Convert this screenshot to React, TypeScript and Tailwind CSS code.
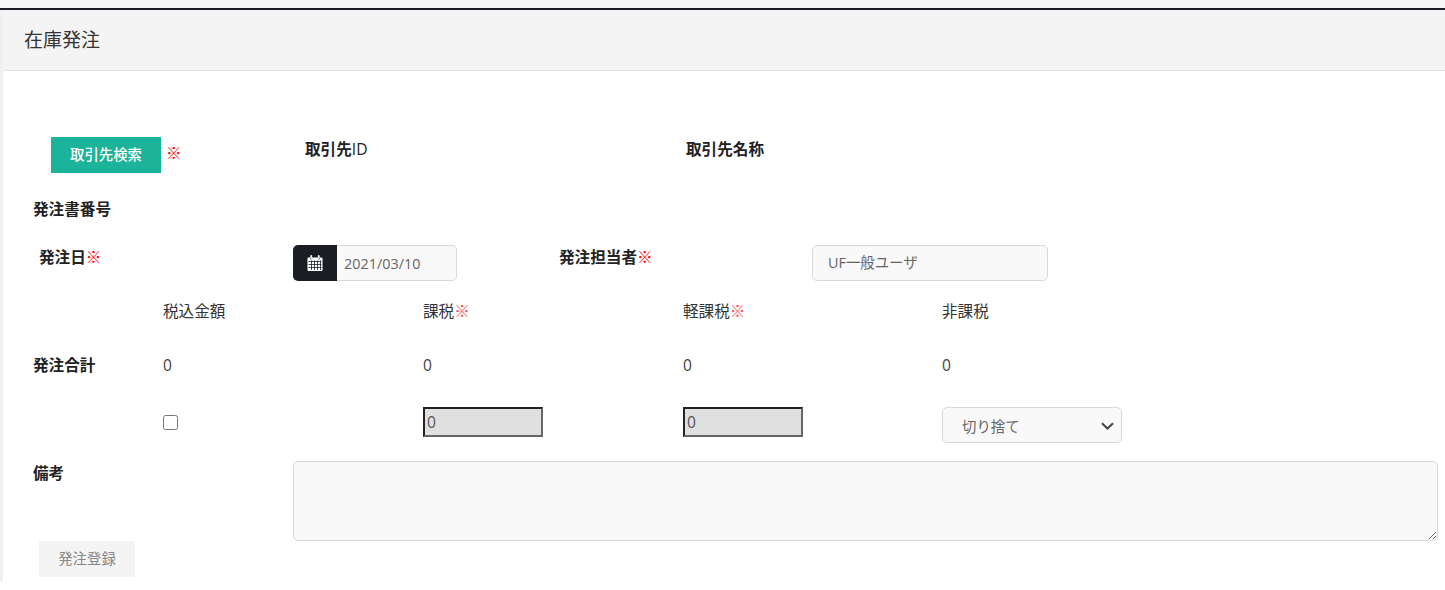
import React from "react";

function Req() {
  return <span className="text-[#ff0000]">※</span>;
}

function CalendarIcon() {
  return (
    <svg width="16" height="16" viewBox="0 0 16 16" fill="none">
      <path d="M0.5 3.500a1 1 0 0 1 1-1H3v1.800h2V2.500h6v1.800h2V2.500h1.500a1 1 0 0 1 1 1V15a1 1 0 0 1-1 1h-13a1 1 0 0 1-1-1z" fill="#fff" />
      <path d="M3.800 0.500h0.800v3h-0.800zM11.400 0.500h0.800v3h-0.800z" stroke="#fff" strokeWidth="1" />
      <path d="M1.500 6.500h13M1.500 9.500h13M1.500 12.500h13M4.500 5.500v9.500M7.500 5.500v9.500M10.500 5.500v9.500M13.500 5.500v9.500" stroke="#1a1d24" strokeWidth="0.8" />
    </svg>
  );
}

export default function App() {
  const font = "font-['Open_Sans','Noto_Sans_CJK_JP',sans-serif]";
  const inputBox =
    "rounded-[5px] border border-[#d9d9d9] bg-[#f9f9f9] text-[14.4px] text-[#666]";
  const inset =
    "h-[30px] w-[120px] border-2 border-t-[#222] border-l-[#222] border-r-[#666] border-b-[#666] bg-[#e0e0e0] px-[2px] text-[15.6px] text-[#555]";
  const bold = "font-bold leading-[22px] text-[#222]";
  return (
    <div className={`${font} min-h-[590px] bg-white text-[15.6px] text-[#333]`}>
      <div className="h-[8px] bg-[#f7f7f7]" />
      <div className="h-[574px] border-l-[3px] border-[#f0f0f0]">
        <div className="h-[2px] -ml-[3px] bg-[#1a1d24]" />
        <div className="flex h-[61px] items-center border-b border-[#e3e3e3] bg-[#f4f4f4] pl-[21px] text-[19px] text-[#333]">
          在庫発注
        </div>

        <div className="flex h-[36px] mt-[66px]">
          <div className="ml-[48px] flex w-[241px] items-center">
            <button className="h-[36px] w-[110px] bg-[#1cb39b] text-[14.4px] font-medium text-white">取引先検索</button>
            <span className="ml-[5px] -mt-[3px]"><Req /></span>
          </div>
          <div className={`ml-[13px] w-[381px] pt-[1px] ${bold}`}>取引先<span className="font-medium">ID</span></div>
          <div className={`pt-[1px] ${bold}`}>取引先名称</div>
        </div>

        <div className={`mt-[25px] h-[22px] pl-[30px] ${bold}`}>発注書番号</div>

        <div className="mt-[25px] flex h-[36px]">
          <div className={`ml-[36px] w-[254px] pt-[1px] ${bold}`}>発注日<Req /></div>
          <div className="flex h-[36px] w-[164px]">
            <div className="flex w-[44px] items-center justify-center rounded-l-[5px] bg-[#1a1d24] pb-[1px]"><CalendarIcon /></div>
            <input readOnly value="2021/03/10" className="h-[36px] w-[120px] rounded-r-[5px] border border-l-0 border-[#d9d9d9] bg-[#f9f9f9] px-[7px] text-[14.4px] text-[#666] outline-none" />
          </div>
          <div className={`ml-[102px] w-[253px] pt-[1px] ${bold}`}>発注担当者<Req /></div>
          <input readOnly value="UF一般ユーザ" className={`${inputBox} h-[36px] w-[236px] px-[15px] pb-[3px] outline-none`} />
        </div>

        <div className="mt-[19px] flex h-[22px] leading-[22px] text-[#333]">
          <div className="ml-[160px] w-[260px]">税込金額</div>
          <div className="w-[260px]">課税<span className="text-[#ff4d4d]">※</span></div>
          <div className="w-[259px]">軽課税<span className="text-[#ff4d4d]">※</span></div>
          <div>非課税</div>
        </div>

        <div className="mt-[32px] flex h-[22px] leading-[22px] text-[#444]">
          <div className="ml-[30px] w-[130px] font-bold text-[#222]">発注合計</div>
          <div className="w-[260px]">0</div>
          <div className="w-[260px]">0</div>
          <div className="w-[259px]">0</div>
          <div>0</div>
        </div>

        <div className="mt-[31px] flex h-[36px] items-start">
          <div className="ml-[160px] w-[260px] pt-[8px]">
            <input type="checkbox" className="block h-[15px] w-[15px]" />
          </div>
          <div className="w-[260px]"><input readOnly value="0" className={inset} /></div>
          <div className="w-[259px]"><input readOnly value="0" className={inset} /></div>
          <div className="relative h-[36px] w-[180px]">
            <select className={`${inputBox} h-[36px] w-[180px] appearance-none px-[19px] pt-[3px] outline-none`}>
              <option>切り捨て</option>
            </select>
            <svg className="pointer-events-none absolute left-[159px] top-[15px]" width="13" height="8" viewBox="0 0 13 8" fill="none">
              <path d="M1 1.200l5.500 5.300 5.500-5.300" stroke="#444" strokeWidth="2" />
            </svg>
          </div>
        </div>

        <div className="mt-[18px] flex h-[80px]">
          <div className={`ml-[30px] w-[260px] pt-[1px] ${bold}`}>備考</div>
          <textarea readOnly className={`${inputBox} h-[80px] w-[1145px] outline-none`} />
        </div>

        <button className="ml-[36px] block h-[36px] w-[96px] bg-[#f4f4f4] text-[14.4px] text-[#888]">発注登録</button>
      </div>
    </div>
  );
}
